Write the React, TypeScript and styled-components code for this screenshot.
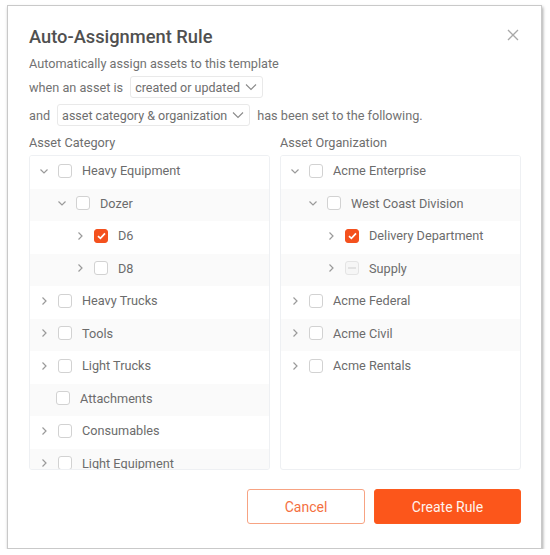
import React from "react";
import styled, { createGlobalStyle } from "styled-components";

const Global = createGlobalStyle`
  html, body { margin: 0; padding: 0; background: #ffffff; }
  body { font-family: Roboto, "Noto Sans", "Liberation Sans", sans-serif; }
  * { box-sizing: border-box; }
`;

const Page = styled.div`
  padding: 5px 0 0 7px;
`;

const Dialog = styled.div`
  width: 535px;
  height: 544px;
  background: #fff;
  border: 1px solid #c9c9c9;
  box-shadow: 1px 2px 3px rgba(0, 0, 0, 0.35);
  padding: 18px 20px 0 21px;
  display: flex;
  flex-direction: column;
`;

const Header = styled.div`
  display: flex;
  align-items: center;
  justify-content: space-between;
  height: 25px;
`;

const Title = styled.h1`
  margin: 0;
  font-size: 18.3px;
  font-weight: 500;
  color: #505050;
  line-height: 25px;
`;

const Close = styled.button`
  border: 0;
  background: none;
  padding: 0;
  width: 14px;
  height: 14px;
  margin-right: 1px;
  margin-top: -4px;
  display: flex;
  align-items: center;
  justify-content: center;
  cursor: pointer;
`;

const Sentence = styled.div<{ $top: number; $h: number }>`
  margin-top: ${(p) => p.$top}px;
  height: ${(p) => p.$h}px;
  display: flex;
  align-items: center;
  gap: 7px;
  font-size: 12.7px;
  color: #727272;
  white-space: nowrap;
`;

const Select = styled.div`
  height: 22px;
  border: 1px solid #e9e9e9;
  border-radius: 3px;
  padding: 0 5px 0 4px;
  display: flex;
  align-items: center;
  gap: 5px;
  color: #6e6e6e;
  font-size: 12.5px;
`;

const Columns = styled.div`
  margin-top: 9px;
  display: grid;
  grid-template-columns: 241px 241px;
  column-gap: 10px;
`;

const Column = styled.div`
  display: flex;
  flex-direction: column;
`;

const Label = styled.div`
  font-size: 12.7px;
  color: #6e6e6e;
  line-height: 16px;
  height: 16px;
  margin-bottom: 4px;
`;

const TreePanel = styled.div`
  height: 315px;
  border: 1px solid #eef0f3;
  border-radius: 3px;
  overflow: hidden;
`;

const Row = styled.div<{ $alt: boolean; $level: number }>`
  height: 32.5px;
  display: flex;
  align-items: center;
  padding-left: ${(p) => 6 + p.$level * 18}px;
  padding-bottom: 3px;
  background: ${(p) => (p.$alt ? "#fafafa" : "#ffffff")};
  font-size: 12.7px;
  color: #6c6c6c;
  white-space: nowrap;
`;

const Toggle = styled.span<{ $leaf: boolean }>`
  width: ${(p) => (p.$leaf ? 14 : 16)}px;
  height: 16px;
  display: flex;
  align-items: center;
  justify-content: center;
  margin-right: 6px;
`;

const Box = styled.span<{ $state: "off" | "on" | "mixed" }>`
  width: 14px;
  height: 14px;
  border-radius: 3px;
  margin-right: 10px;
  flex: none;
  display: flex;
  align-items: center;
  justify-content: center;
  border: 1px solid
    ${(p) => (p.$state === "on" ? "#f4511e" : p.$state === "mixed" ? "#e4e4e4" : "#d2d2d2")};
  background: ${(p) => (p.$state === "on" ? "#f4511e" : p.$state === "mixed" ? "#f6f6f6" : "#fff")};
`;

const Footer = styled.div`
  margin-top: 19px;
  display: flex;
  justify-content: flex-end;
  gap: 9px;
`;

const Button = styled.button<{ $primary?: boolean }>`
  height: 35px;
  width: ${(p) => (p.$primary ? 147 : 118)}px;
  border-radius: 3px;
  font-family: Roboto, "Noto Sans", sans-serif;
  font-size: 14px;
  cursor: pointer;
  border: 1px solid ${(p) => (p.$primary ? "#fc5a1e" : "#f7a383")};
  background: ${(p) => (p.$primary ? "#fc561b" : "#fff")};
  color: ${(p) => (p.$primary ? "#fff3ee" : "#f4703f")};
`;

const Chevron = ({ open }: { open: boolean }) =>
  open ? (
    <svg width="10" height="10" viewBox="0 0 10 10">
      <path d="M1.5 3.5 L5 7 L8.5 3.5" fill="none" stroke="#9a9a9a" strokeWidth="1.2" />
    </svg>
  ) : (
    <svg width="10" height="10" viewBox="0 0 10 10">
      <path d="M3.5 1.5 L7 5 L3.5 8.5" fill="none" stroke="#9a9a9a" strokeWidth="1.2" />
    </svg>
  );

const SmallChevron = () => (
  <svg width="12" height="8" viewBox="0 0 12 8">
    <path d="M1 1.5 L6 6.5 L11 1.5" fill="none" stroke="#8a8a8a" strokeWidth="1.1" />
  </svg>
);

type Item = {
  label: string;
  level: number;
  toggle: "open" | "closed" | "none";
  state: "off" | "on" | "mixed";
};

const categories: Item[] = [
  { label: "Heavy Equipment", level: 0, toggle: "open", state: "off" },
  { label: "Dozer", level: 1, toggle: "open", state: "off" },
  { label: "D6", level: 2, toggle: "closed", state: "on" },
  { label: "D8", level: 2, toggle: "closed", state: "off" },
  { label: "Heavy Trucks", level: 0, toggle: "closed", state: "off" },
  { label: "Tools", level: 0, toggle: "closed", state: "off" },
  { label: "Light Trucks", level: 0, toggle: "closed", state: "off" },
  { label: "Attachments", level: 0, toggle: "none", state: "off" },
  { label: "Consumables", level: 0, toggle: "closed", state: "off" },
  { label: "Light Equipment", level: 0, toggle: "closed", state: "off" },
];

const organizations: Item[] = [
  { label: "Acme Enterprise", level: 0, toggle: "open", state: "off" },
  { label: "West Coast Division", level: 1, toggle: "open", state: "off" },
  { label: "Delivery Department", level: 2, toggle: "closed", state: "on" },
  { label: "Supply", level: 2, toggle: "closed", state: "mixed" },
  { label: "Acme Federal", level: 0, toggle: "closed", state: "off" },
  { label: "Acme Civil", level: 0, toggle: "closed", state: "off" },
  { label: "Acme Rentals", level: 0, toggle: "closed", state: "off" },
];

const Tree = ({ items }: { items: Item[] }) => (
  <TreePanel>
    {items.map((it, i) => (
      <Row key={it.label} $alt={i % 2 === 1} $level={it.level}>
        <Toggle $leaf={it.toggle === "none"}>
          {it.toggle !== "none" && <Chevron open={it.toggle === "open"} />}
        </Toggle>
        <Box $state={it.state}>
          {it.state === "on" && (
            <svg width="9" height="8" viewBox="0 0 9 8">
              <path d="M1 4.2 L3.4 6.4 L8 1.4" fill="none" stroke="#fff" strokeWidth="1.7" />
            </svg>
          )}
          {it.state === "mixed" && (
            <svg width="8" height="2" viewBox="0 0 8 2">
              <rect x="0" y="0.4" width="8" height="1.2" fill="#d4d4d4" />
            </svg>
          )}
        </Box>
        {it.label}
      </Row>
    ))}
  </TreePanel>
);

export default function App() {
  return (
    <>
      <Global />
      <Page>
        <Dialog>
          <Header>
            <Title>Auto-Assignment Rule</Title>
            <Close aria-label="Close">
              <svg width="12" height="12" viewBox="0 0 12 12">
                <path d="M1 1 L11 11 M11 1 L1 11" stroke="#a8a8a8" strokeWidth="1.3" />
              </svg>
            </Close>
          </Header>
          <Sentence $top={4} $h={20}>
            Automatically assign assets to this template
          </Sentence>
          <Sentence $top={3} $h={22}>
            when an asset is
            <Select>
              created or updated <SmallChevron />
            </Select>
          </Sentence>
          <Sentence $top={6} $h={22}>
            and
            <Select>
              asset category &amp; organization <SmallChevron />
            </Select>
            has been set to the following.
          </Sentence>
          <Columns>
            <Column>
              <Label>Asset Category</Label>
              <Tree items={categories} />
            </Column>
            <Column>
              <Label>Asset Organization</Label>
              <Tree items={organizations} />
            </Column>
          </Columns>
          <Footer>
            <Button>Cancel</Button>
            <Button $primary>Create Rule</Button>
          </Footer>
        </Dialog>
      </Page>
    </>
  );
}
